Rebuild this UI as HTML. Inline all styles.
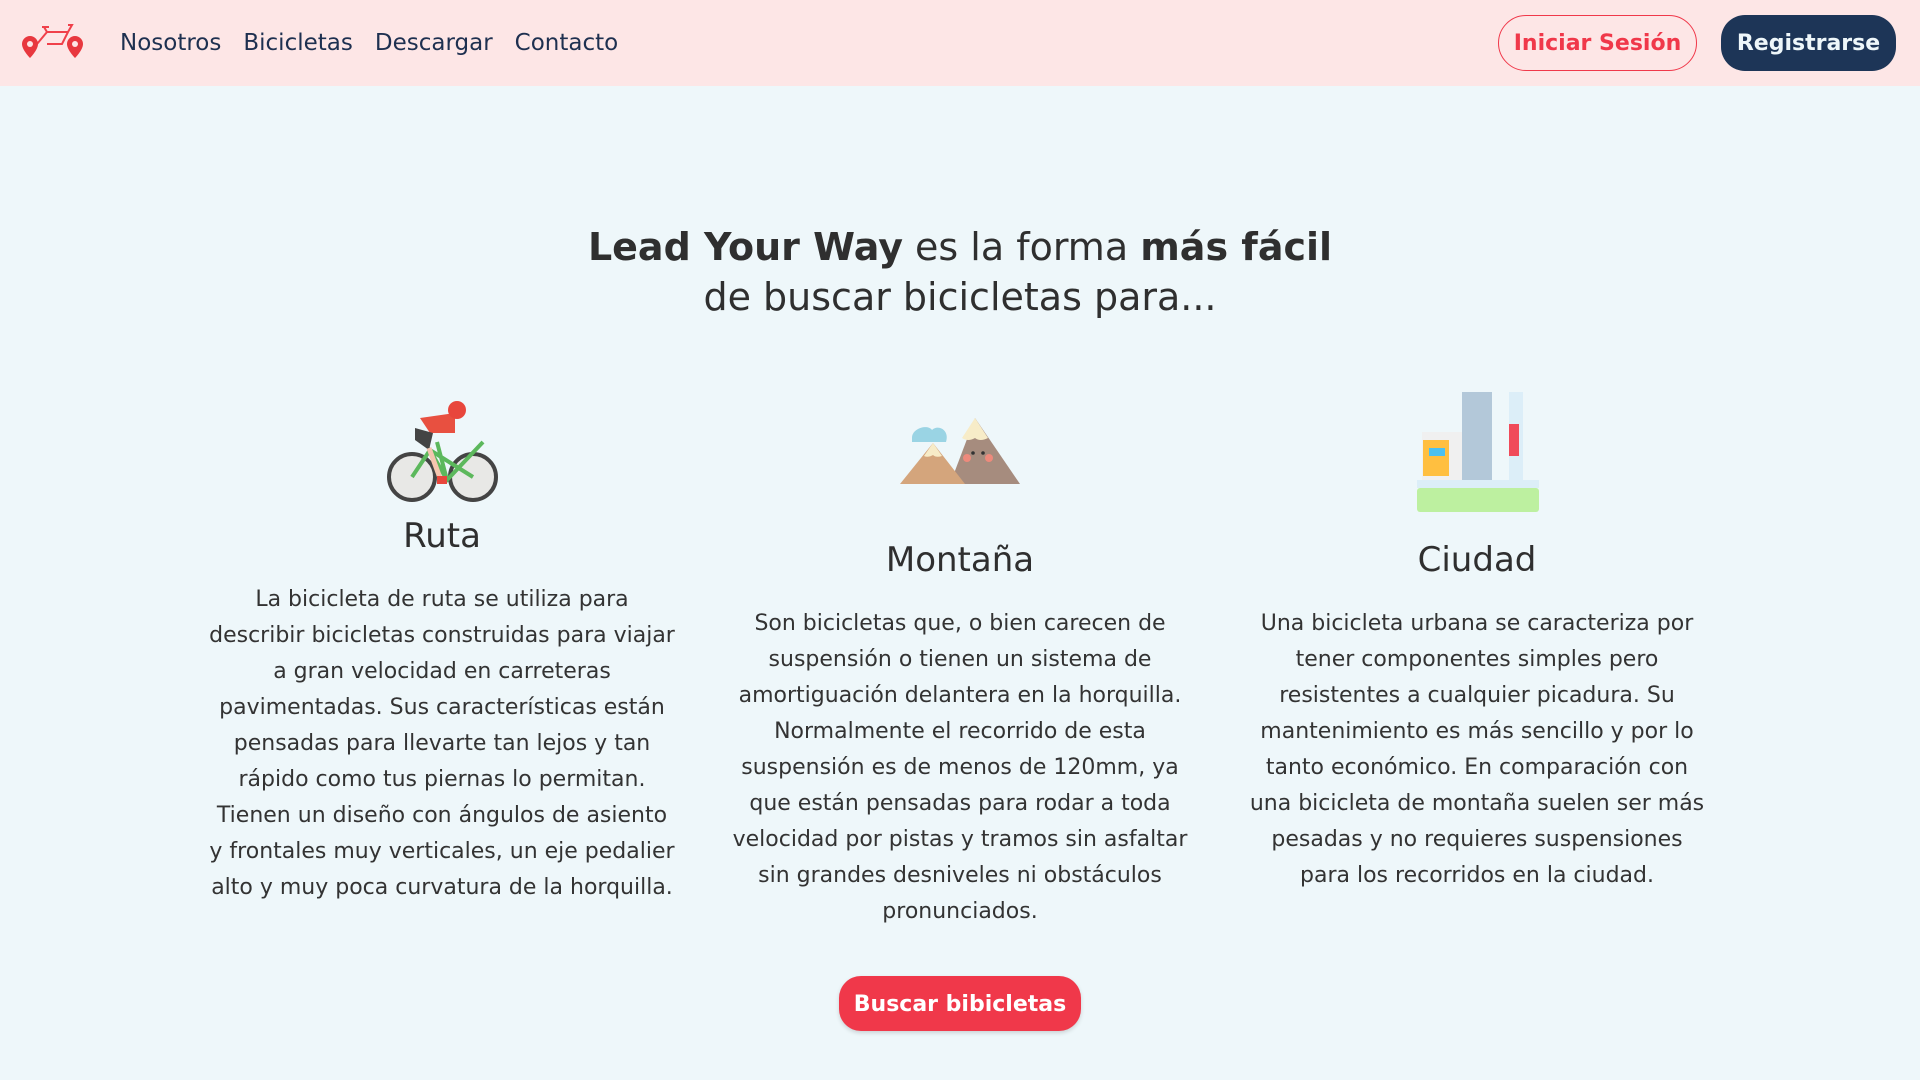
<!DOCTYPE html>
<html><head><meta charset="utf-8"><style>
*{margin:0;padding:0;box-sizing:border-box}
body{width:1920px;height:1080px;background:#eef7fa;font-family:"DejaVu Sans","Liberation Sans",sans-serif;color:#333;overflow:hidden;position:relative}
nav{position:absolute;left:0;top:0;width:1920px;height:86px;background:#fde6e6}
.logo{position:absolute;left:22px;top:22px}
.links{position:absolute;left:120px;top:30px;font-size:23px;color:#1e3050}
.links span{margin-right:22px}
.btn1{position:absolute;left:1498px;top:15px;width:199px;height:56px;border:1.5px solid #f0384a;border-radius:28px;color:#f0384a;font-weight:bold;font-size:22px;text-align:center;line-height:56px}
.btn2{position:absolute;left:1721px;top:15px;width:175px;height:56px;background:#1d3557;border-radius:24px;color:#eef7fa;font-weight:bold;font-size:22px;text-align:center;line-height:58px}
h1{position:absolute;left:0;width:1920px;top:222px;text-align:center;font-weight:normal;font-size:38px;line-height:50px;color:#2f2f2f}
.col{position:absolute;text-align:center;width:520px;white-space:nowrap}
.col h2{font-weight:normal;font-size:34px;color:#2f2f2f}
.col p{font-size:22px;line-height:36px;color:#333;margin-top:26px}
.cta{position:absolute;left:839px;top:976px;width:242px;height:55px;background:#f0384a;border-radius:22px;color:#fff;font-weight:bold;font-size:22px;text-align:center;line-height:57px;box-shadow:0 2px 4px rgba(0,0,0,.15)}
</style></head><body>
<nav>
<svg class="logo" width="62" height="42" viewBox="0 0 62 42"><g stroke="#f0404a" stroke-width="2" fill="none"><path d="M15 22 L25 10 L46 10 L40 22 L25 22 M25 10 L22 5 M46 10 L50 3 L46 3 M20 5 L27 5"/></g><path d="M8 14a8 8 0 0 1 8 8c0 6-8 14-8 14s-8-8-8-14a8 8 0 0 1 8-8z" fill="#e8383f"/><circle cx="8" cy="22" r="3" fill="#fde6e6"/><path d="M53 14a8 8 0 0 1 8 8c0 6-8 14-8 14s-8-8-8-14a8 8 0 0 1 8-8z" fill="#e8383f"/><circle cx="53" cy="22" r="3" fill="#fde6e6"/></svg>
<div class="links"><span>Nosotros</span><span>Bicicletas</span><span>Descargar</span><span>Contacto</span></div>
<div class="btn1">Iniciar Sesión</div>
<div class="btn2">Registrarse</div>
</nav>
<h1><b>Lead Your Way</b> es la forma <b>más fácil</b><br>de buscar bicicletas para...</h1>

<svg style="position:absolute;left:385px;top:398px" width="116" height="108" viewBox="0 0 116 108"><circle cx="27" cy="79" r="23" fill="#e8e8e6" stroke="#444" stroke-width="4"/><circle cx="88" cy="79" r="23" fill="#e8e8e6" stroke="#444" stroke-width="4"/><path d="M27 79 L45 52 L88 79 M45 52 L62 82 L98 44 M52 44 L62 82" stroke="#5cb85c" stroke-width="4" fill="none"/><path d="M35 20 L70 15 L70 35 L45 35 Z" fill="#e85040"/><path d="M30 30 L48 35 L44 52 L30 42Z" fill="#444"/><circle cx="72" cy="12" r="9" fill="#e8463c"/><path d="M44 50 L55 80" stroke="#f5c6b0" stroke-width="5"/><rect x="52" y="78" width="10" height="8" fill="#e8463c"/></svg>
<svg style="position:absolute;left:900px;top:418px" width="122" height="70" viewBox="0 0 122 70"><path d="M12 20c0-10 16-14 20-8 6-6 18 0 14 12H12z" fill="#9ad4e4"/><path d="M75 0 L120 66 H50 Z" fill="#a68c7e"/><path d="M75 0 L88 20 Q80 24 75 20 Q68 24 62 20Z" fill="#f7ecc8"/><path d="M33 25 L65 66 H0 Z" fill="#d4a57c"/><path d="M33 25 L42 38 Q36 40 33 37 Q28 40 24 38Z" fill="#f7ecc8"/><circle cx="67" cy="40" r="4" fill="#ee8a7c"/><circle cx="89" cy="40" r="4" fill="#ee8a7c"/><circle cx="73" cy="35" r="1.8" fill="#333"/><circle cx="83" cy="35" r="1.8" fill="#333"/></svg>
<svg style="position:absolute;left:1417px;top:392px" width="122" height="120" viewBox="0 0 122 120"><rect x="45" y="0" width="30" height="90" fill="#b3c8d9"/><rect x="92" y="0" width="14" height="90" fill="#dceef8"/><rect x="92" y="32" width="10" height="32" fill="#f04a5a"/><rect x="5" y="40" width="40" height="50" fill="#f0f0f0"/><rect x="6" y="48" width="26" height="36" fill="#ffbf40"/><rect x="12" y="56" width="8" height="8" fill="#4bc0f0"/><rect x="20" y="56" width="8" height="8" fill="#4bc0f0"/><rect x="0" y="88" width="122" height="8" fill="#dceef8"/><rect x="0" y="96" width="122" height="24" rx="3" fill="#bdf0a0"/></svg>

<div class="col" style="left:182px;top:516px"><h2>Ruta</h2><p>La bicicleta de ruta se utiliza para<br>describir bicicletas construidas para viajar<br>a gran velocidad en carreteras<br>pavimentadas. Sus características están<br>pensadas para llevarte tan lejos y tan<br>rápido como tus piernas lo permitan.<br>Tienen un diseño con ángulos de asiento<br>y frontales muy verticales, un eje pedalier<br>alto y muy poca curvatura de la horquilla.</p></div>
<div class="col" style="left:700px;top:540px"><h2>Montaña</h2><p>Son bicicletas que, o bien carecen de<br>suspensión o tienen un sistema de<br>amortiguación delantera en la horquilla.<br>Normalmente el recorrido de esta<br>suspensión es de menos de 120mm, ya<br>que están pensadas para rodar a toda<br>velocidad por pistas y tramos sin asfaltar<br>sin grandes desniveles ni obstáculos<br>pronunciados.</p></div>
<div class="col" style="left:1217px;top:540px"><h2>Ciudad</h2><p>Una bicicleta urbana se caracteriza por<br>tener componentes simples pero<br>resistentes a cualquier picadura. Su<br>mantenimiento es más sencillo y por lo<br>tanto económico. En comparación con<br>una bicicleta de montaña suelen ser más<br>pesadas y no requieres suspensiones<br>para los recorridos en la ciudad.</p></div>
<div class="cta">Buscar bibicletas</div>
</body></html>
